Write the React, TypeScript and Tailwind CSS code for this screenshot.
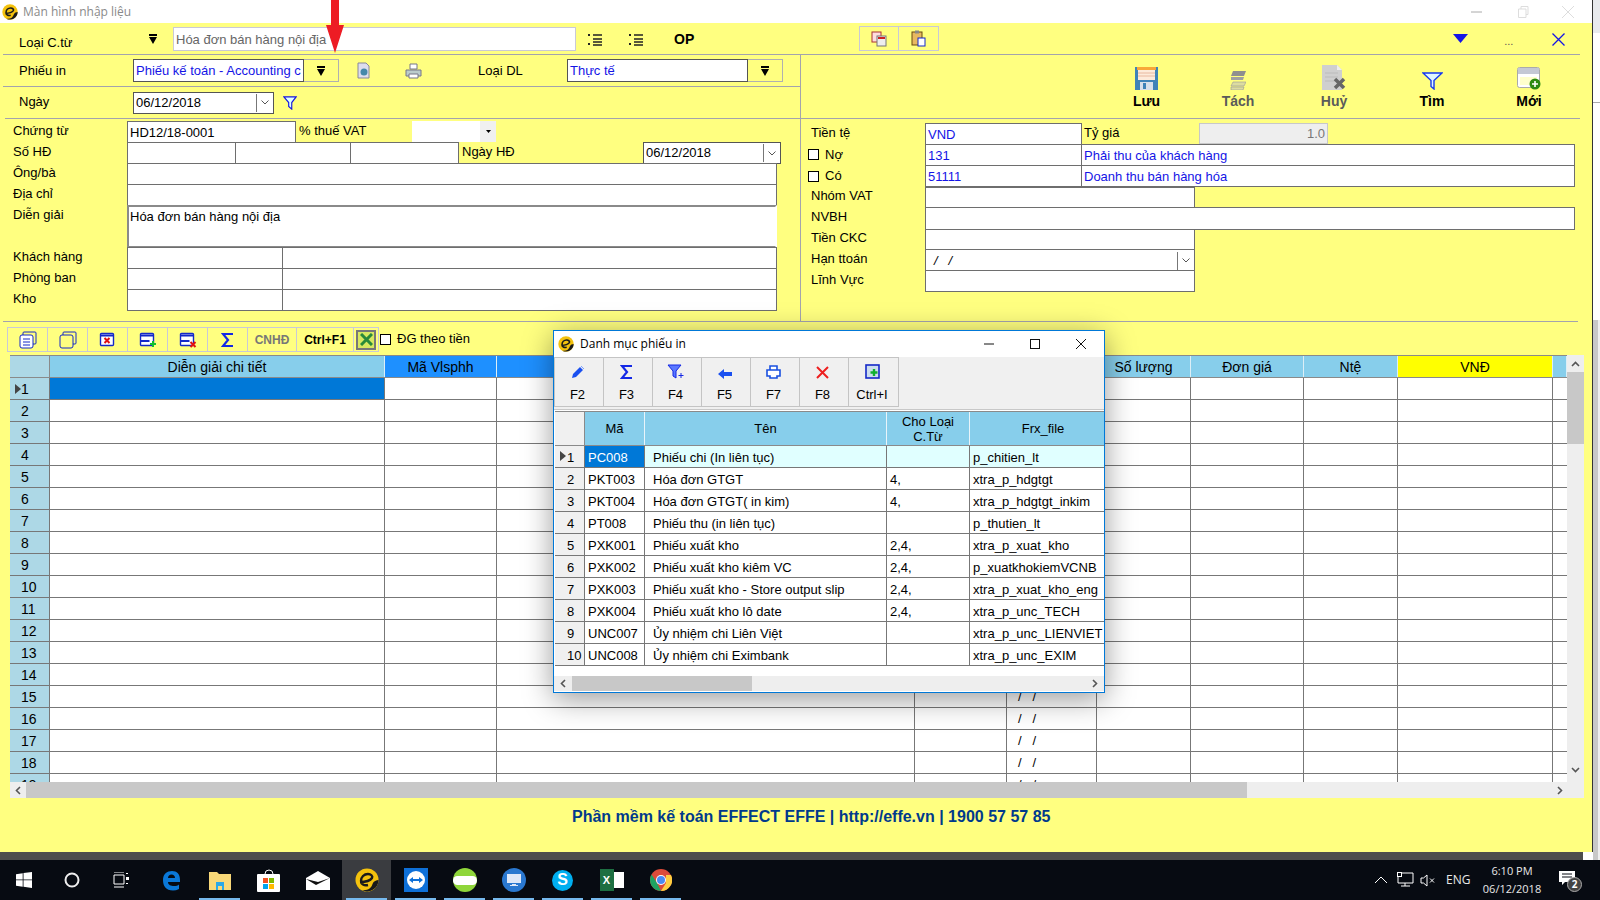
import type { ReactNode } from "react";

const Ctl = ({ className = "", children }: { className?: string; children?: ReactNode }) => (
  <div className={`h-[22px] shrink-0 -ml-px border border-[#6e6e6e] bg-white pl-[2px] pt-px flex items-center overflow-hidden whitespace-nowrap ${className}`}>
    {children}
  </div>
);

const Chevron = () => (
  <div className="ml-auto h-[18px] w-[17px] border-l border-[#777] flex items-center justify-center shrink-0">
    <svg width="8" height="5" viewBox="0 0 8 5"><path d="M0.5 0.5 4 4 7.5 0.5" fill="none" stroke="#555" /></svg>
  </div>
);

const DropArrow = ({ className = "" }: { className?: string }) => (
  <svg className={className} width="8" height="10" viewBox="0 0 8 10"><path d="M0 0h8v2H0zM0 3h8L4 10z" fill="#000" /></svg>
);

const Line = ({ className = "" }: { className?: string }) => <div className={`h-px bg-[#a3a3ad] shrink-0 ${className}`} />;

const EffeLogo = ({ size = 16 }: { size?: number }) => (
  <svg width={size} height={size} viewBox="0 0 24 24">
    <circle cx="12" cy="12" r="11.5" fill="#f4c20d" />
    <path d="M23.5 12a11.5 11.5 0 0 1-17 10c6 1 10-2 11-6 1-3 4-4 6-4z" fill="#1a1a1a" />
    <path d="M5 14c4 0 10-1 12-4 1-2-1-4-4-4-4 0-7 3-7 7 0 3 3 5 7 4" fill="none" stroke="#1a1a1a" strokeWidth="2.4" />
  </svg>
);

const ListIcon = () => (
  <svg width="16" height="14" viewBox="0 0 16 14">
    <path d="M1 1l2 2M3 1L1 3M1 10l2 2M3 10l-2 2" stroke="#222" />
    <path d="M6 2h9M6 6h9M6 9h9M6 12h9" stroke="#222" strokeWidth="1.4" />
  </svg>
);

const Funnel = ({ size = 16 }: { size?: number }) => (
  <svg width={size} height={size} viewBox="0 0 16 16">
    <path d="M1 1h14L10 7.5V15L6.5 12V7.5z" fill="#dff" stroke="#1414e0" strokeWidth="1.3" />
  </svg>
);

const Sigma = () => (
  <svg width="13" height="14" viewBox="0 0 13 14"><path d="M12 1H2l5 6-5 6h10" fill="none" stroke="#1428e6" strokeWidth="2.2" /></svg>
);

const WinIcon = ({ mark }: { mark: "x" | "plus" | "minusx" }) => (
  <svg width="18" height="18" viewBox="0 0 18 18">
    <rect x="1.5" y="2.5" width="13" height="12" rx="1" fill="#fff" stroke="#1428c8" strokeWidth="1.4" />
    <path d="M1.5 4.5h13" stroke="#1428c8" strokeWidth="2" />
    {mark === "x" && <path d="M5.5 7l5 5M10.5 7l-5 5" stroke="#e01010" strokeWidth="2" />}
    {mark === "plus" && <><path d="M1.5 10h9" stroke="#1428c8" strokeWidth="2" /><path d="M14 10v6M11 13h6" stroke="#10c030" strokeWidth="2" /></>}
    {mark === "minusx" && <><path d="M1.5 10h9" stroke="#1428c8" strokeWidth="2" /><path d="M11.5 11l5 5M16.5 11l-5 5" stroke="#e01010" strokeWidth="2" /></>}
  </svg>
);

const gridCols = ["w-[335px]", "w-[112px]", "w-[418px]", "w-[92px]", "w-[90px]", "w-[94px]", "w-[113px]", "w-[94px]", "w-[155px]", "w-[14px]"];
const gridHeads: [string, string][] = [
  ["Diễn giải chi tiết", "bg-[#87ceeb]"],
  ["Mã Vlsphh", "bg-[#1e90ff]"],
  ["", "bg-[#1e90ff]"],
  ["", "bg-[#87ceeb]"],
  ["", "bg-[#87ceeb]"],
  ["Số lượng", "bg-[#87ceeb]"],
  ["Đơn giá", "bg-[#87ceeb]"],
  ["Ntệ", "bg-[#87ceeb]"],
  ["VNĐ", "bg-[#ffff00]"],
  ["", "bg-[#87ceeb]"],
];

const printForms = [
  ["PC008", "Phiếu chi (In liên tục)", "", "p_chitien_lt"],
  ["PKT003", "Hóa đơn GTGT", "4,", "xtra_p_hdgtgt"],
  ["PKT004", "Hóa đơn GTGT( in kim)", "4,", "xtra_p_hdgtgt_inkim"],
  ["PT008", "Phiếu thu (in liên tục)", "", "p_thutien_lt"],
  ["PXK001", "Phiếu xuất kho", "2,4,", "xtra_p_xuat_kho"],
  ["PXK002", "Phiếu xuất kho kiêm VC", "2,4,", "p_xuatkhokiemVCNB"],
  ["PXK003", "Phiếu xuất kho - Store output slip", "2,4,", "xtra_p_xuat_kho_eng"],
  ["PXK004", "Phiếu xuất kho lô date", "2,4,", "xtra_p_unc_TECH"],
  ["UNC007", "Ủy nhiệm chi Liên Việt", "", "xtra_p_unc_LIENVIET"],
  ["UNC008", "Ủy nhiệm chi Eximbank", "", "xtra_p_unc_EXIM"],
];

const dialogTools: [ReactNode, string][] = [
  [<svg width="14" height="14" viewBox="0 0 14 14"><path d="M1 13l1-4 7-7 3 3-7 7z" fill="#1a50f0" /><path d="M10 1l3 3" stroke="#7aa0ff" /></svg>, "F2"],
  [<Sigma />, "F3"],
  [<svg width="18" height="15" viewBox="0 0 18 15"><path d="M1 1h13L9 7v7L6 12V7z" fill="#5a78ff" stroke="#1428e6" /><path d="M14 9v5M11.5 11.5h5" stroke="#1428e6" /></svg>, "F4"],
  [<svg width="14" height="10" viewBox="0 0 14 10"><path d="M0 5l6-5v3h8v4H6v3z" fill="#1a50f0" /></svg>, "F5"],
  [<svg width="15" height="14" viewBox="0 0 15 14"><path d="M4 1h7v4H4zM1 5h13v6h-3v2H4v-2H1z" fill="#fff" stroke="#1a50e0" strokeWidth="1.6" /></svg>, "F7"],
  [<svg width="13" height="13" viewBox="0 0 13 13"><path d="M1 1l11 11M12 1L1 12" stroke="#ee2020" strokeWidth="2" /></svg>, "F8"],
  [<svg width="15" height="15" viewBox="0 0 15 15"><rect x="1" y="1" width="13" height="13" fill="#cde" stroke="#1428c8" strokeWidth="1.6" /><path d="M9 5v7M5.5 8.5h7" stroke="#10b030" strokeWidth="2.4" /></svg>, "Ctrl+I"],
];

const Dialog = () => (
  <div className="absolute left-[553px] top-[330px] w-[552px] h-[363px] bg-white border border-[#0078d7] shadow-[0_6px_28px_rgba(0,0,0,0.4)] flex flex-col text-[13px] text-black">
    <div className="h-[26px] flex items-center pl-[4px] shrink-0">
      <EffeLogo />
      <span className="ml-[6px] [font-family:'Open_Sans',sans-serif] text-[12px]">Danh mục phiếu in</span>
      <div className="ml-auto flex items-center">
        <div className="w-[46px] flex justify-center"><svg width="10" height="10" viewBox="0 0 10 10"><path d="M0 5h10" stroke="#111" /></svg></div>
        <div className="w-[46px] flex justify-center"><svg width="10" height="10" viewBox="0 0 10 10"><rect x="0.5" y="0.5" width="9" height="9" fill="none" stroke="#111" /></svg></div>
        <div className="w-[46px] flex justify-center"><svg width="10" height="10" viewBox="0 0 10 10"><path d="M0 0l10 10M10 0L0 10" stroke="#111" /></svg></div>
      </div>
    </div>
    <div className="h-[53px] bg-[#f0f0f0] shrink-0 border-b border-[#c8c8c8]">
      <div className="flex h-[50px] w-fit border border-[#c4c4c4]">
        {dialogTools.map(([icon, key]) => (
          <div key={key} className="w-[49px] pr-[3px] border-r last:border-r-0 border-[#c4c4c4] flex flex-col items-center">
            <div className="h-[21px] flex items-end">{icon}</div>
            <div className="mt-[9px] leading-[14px]">{key}</div>
          </div>
        ))}
      </div>
    </div>
    <div className="flex-1 min-h-0 pl-[1px] pt-[1px] flex flex-col">
      <div className="flex h-[35px] shrink-0 border-t border-b border-[#8a8a8a]">
        <div className="w-[30px] bg-[#f0f0f0] border-r border-[#8a8a8a]" />
        {[
          ["Mã", "w-[60px] px-[8px]"],
          ["Tên", "w-[242px] px-[8px]"],
          ["Cho Loại C.Từ", "w-[83px] px-[8px]"],
          ["Frx_file", "flex-1 pl-[12px]"],
        ].map(([t, w]) => (
          <div key={t} className={`${w} bg-[#87ceeb] border-r border-[#e8f4fa] last:border-r-0 flex items-center justify-center text-center leading-[15px]`}>{t}</div>
        ))}
      </div>
      {printForms.map((r, i) => (
        <div key={r[0]} className={`flex h-[22px] shrink-0 border-b border-[#777] ${i === 0 ? "bg-[#e0ffff]" : ""}`}>
          <div className="w-[30px] bg-[#f0f0f0] border-r border-[#777] flex items-center pl-[12px] pt-[2px] relative">
            {i === 0 && <svg className="absolute left-[5px] top-[5px]" width="6" height="10" viewBox="0 0 6 10"><path d="M0 0l6 5-6 5z" fill="#444" /></svg>}
            {i + 1}
          </div>
          <div className={`w-[60px] border-r border-[#777] pl-[3px] pt-[2px] flex items-center ${i === 0 ? "bg-[#0078d7] text-white" : ""}`}>{r[0]}</div>
          <div className="w-[242px] border-r border-[#777] pl-[8px] pt-[2px] flex items-center whitespace-nowrap">{r[1]}</div>
          <div className="w-[83px] border-r border-[#777] pl-[3px] pt-[2px] flex items-center">{r[2]}</div>
          <div className="flex-1 pl-[3px] pt-[2px] flex items-center whitespace-nowrap overflow-hidden">{r[3]}</div>
        </div>
      ))}
    </div>
    <div className="h-[15px] shrink-0 bg-[#eeeeee] flex items-center mb-[1px]">
      <div className="w-[18px] flex justify-center"><svg width="6" height="9" viewBox="0 0 6 9"><path d="M5 1L1.5 4.5 5 8" fill="none" stroke="#555" strokeWidth="1.6" /></svg></div>
      <div className="w-[180px] h-full bg-[#c8c8c8]" />
      <div className="ml-auto w-[18px] flex justify-center"><svg width="6" height="9" viewBox="0 0 6 9"><path d="M1 1l3.500 3.500L1 8" fill="none" stroke="#555" strokeWidth="1.6" /></svg></div>
    </div>
  </div>
);

const ActionButton = ({ label, dim, icon, className }: { label: string; dim?: boolean; icon: ReactNode; className: string }) => (
  <div className={`${className} flex flex-col items-center`}>
    <div className="h-[25px] flex items-end">{icon}</div>
    <div className={`mt-[3px] font-bold text-[14px] leading-[16px] ${dim ? "text-[#5a5a5a]" : "text-black"}`}>{label}</div>
  </div>
);

const TaskIcon = ({ active, run = true, children }: { active?: boolean; run?: boolean; children: ReactNode }) => (
  <div className={`w-[49px] h-full flex items-center justify-center relative ${active ? "bg-[#3a3c40]" : ""}`}>
    {children}
    {run && <div className="absolute bottom-0 left-[4px] right-[4px] h-[2px] bg-[#76b9ed]" />}
  </div>
);

export default function App() {
  return (
    <div className="relative w-[1600px] h-[900px] overflow-hidden bg-white [font-family:'Liberation_Sans',sans-serif] text-[13px] text-black">
      <div className="flex h-[860px]">
        <div className="w-[1593px] flex flex-col">
          {/* title bar */}
          <div className="h-[23px] shrink-0 bg-white flex items-center pl-[2px] border-r border-[#333]">
            <EffeLogo />
            <span className="ml-[5px] [font-family:'Open_Sans',sans-serif] text-[12px] text-[#8a8a8a]">Màn hình nhập liệu</span>
            <div className="ml-auto flex items-center pr-[17px] text-[#ccc]">
              <svg width="12" height="10" viewBox="0 0 12 10"><path d="M0 5h11" stroke="#aaa" /></svg>
              <svg className="ml-[35px]" width="11" height="12" viewBox="0 0 11 12"><path d="M3 3V.5h7v8H8M.5 3h7.5v8.500H.5z" fill="none" stroke="#ddd" /></svg>
              <svg className="ml-[32px]" width="14" height="14" viewBox="0 0 14 14"><path d="M1 1l12 12M13 1L1 13" stroke="#ddd" /></svg>
            </div>
          </div>

          <div className="h-[829px] shrink-0 bg-[#ffff80] border-r border-[#333] flex flex-col">
            {/* top strip */}
            <div className="h-[31px] shrink-0 flex items-center pl-[19px]">
              <span className="w-[130px] mt-[9px]">Loại C.từ</span>
              <DropArrow className="mr-[16px]" />
              <div className="w-[403px] h-[24px] mt-px pt-[2px] border border-[#c9c9d6] bg-white flex items-center pl-[2px] text-[#666]">Hóa đơn bán hàng nội địa</div>
              <div className="ml-[11px] mt-[2px]"><ListIcon /></div>
              <div className="ml-[25px] mt-[2px]"><ListIcon /></div>
              <span className="ml-[30px] mt-[2px] font-bold text-[14px]">OP</span>
              <div className="ml-[165px] flex h-[25px] border border-[#c9c9d6]">
                <div className="w-[39px] border-r border-[#c9c9d6] flex items-center justify-center">
                  <svg width="16" height="16" viewBox="0 0 16 16"><rect x="1" y="1" width="9" height="10" fill="#fdd" stroke="#a33" /><rect x="6" y="5" width="9" height="10" fill="#eee" stroke="#777" /><path d="M7 7h7" stroke="#c22" strokeWidth="2" /></svg>
                </div>
                <div className="w-[39px] flex items-center justify-center">
                  <svg width="15" height="17" viewBox="0 0 15 17"><rect x="1" y="2" width="10" height="13" fill="#e8b860" stroke="#6a4a10" /><rect x="4" y="0.5" width="4" height="3" fill="#888" /><rect x="7" y="8" width="7" height="8" fill="#fff" stroke="#1428c8" /></svg>
                </div>
              </div>
              <svg className="ml-[514px]" width="15" height="9" viewBox="0 0 15 9"><path d="M0 0h15L7.500 9z" fill="#1414e6" /></svg>
              <span className="ml-[36px] mt-[6px] text-[#555] text-[11px]">...</span>
              <svg className="ml-[39px] mt-px" width="13" height="13" viewBox="0 0 13 13"><path d="M0.5 0.5l12 12M12.5 0.5l-12 12" stroke="#1414e6" strokeWidth="1.3" /></svg>
            </div>
            <Line className="ml-[3px] w-[1577px]" />

            {/* form body */}
            <div className="h-[266px] shrink-0 flex">
              <div className="w-[797px] shrink-0 ml-[3px] flex flex-col">
                <div className="h-[31px] shrink-0 flex items-center pl-[16px]">
                  <span className="w-[114px]">Phiếu in</span>
                  <div className="w-[171px] h-[23px] border border-[#555] bg-white pl-[2px] flex items-center text-[#1414e6] overflow-hidden whitespace-nowrap">Phiếu kế toán - Accounting c</div>
                  <div className="w-[35px] h-[23px] border border-l-0 border-[#b0b0b0] flex items-center justify-center"><DropArrow /></div>
                  <svg className="ml-[17px]" width="15" height="17" viewBox="0 0 15 17"><path d="M2 1h8l3 3v12H2z" fill="#dde" stroke="#889" /><circle cx="8" cy="10" r="3.500" fill="#48a" /></svg>
                  <svg className="ml-[34px]" width="17" height="16" viewBox="0 0 17 16"><path d="M5 1h7v5H5z" fill="#fff" stroke="#778" /><path d="M1 7h15v6H1z" fill="#bcc" stroke="#778" /><path d="M4 11h9v4H4z" fill="#fff" stroke="#778" /></svg>
                  <span className="ml-[56px] w-[89px]">Loại DL</span>
                  <div className="w-[181px] h-[23px] border border-[#555] bg-white pl-[2px] flex items-center text-[#1414e6]">Thực tế</div>
                  <div className="w-[35px] h-[23px] border border-l-0 border-[#b0b0b0] flex items-center justify-center"><DropArrow /></div>
                </div>
                <Line />
                <div className="h-[31px] shrink-0 flex items-center pl-[16px]">
                  <span className="w-[114px] -mt-[2px]">Ngày</span>
                  <div className="w-[141px] h-[22px] border border-[#555] bg-white pl-[2px] flex items-center">06/12/2018<Chevron /></div>
                  <div className="ml-[9px] mt-px"><Funnel size={14} /></div>
                </div>
                <Line className="ml-[2px]" />
                <div className="pt-[2px] pl-[10px] flex flex-col">
                  <div className="flex h-[21px]">
                    <span className="w-[115px]">Chứng từ</span>
                    <Ctl className="w-[169px]">HD12/18-0001</Ctl>
                    <span className="w-[116px] pl-[3px]">% thuế VAT</span>
                    <div className="w-[84px] h-[21px] bg-white flex justify-end">
                      <div className="w-[16px] bg-[#f0f0f0] flex items-center justify-center"><svg width="5" height="3" viewBox="0 0 5 3"><path d="M0 0h5L2.500 3z" fill="#000" /></svg></div>
                    </div>
                  </div>
                  <div className="flex h-[21px]">
                    <span className="w-[115px]">Số HĐ</span>
                    <Ctl className="w-[109px]" />
                    <Ctl className="w-[116px]" />
                    <Ctl className="w-[109px]" />
                    <span className="w-[184px] pl-[3px]">Ngày HĐ</span>
                    <div className="w-[138px] h-[22px] border border-[#555] bg-white pl-[2px] flex items-center">06/12/2018<Chevron /></div>
                  </div>
                  <div className="flex h-[21px]"><span className="w-[115px]">Ông/bà</span><Ctl className="w-[650px]" /></div>
                  <div className="flex h-[21px]"><span className="w-[115px]">Địa chỉ</span><Ctl className="w-[650px]" /></div>
                  <div className="flex h-[42px]">
                    <span className="w-[115px]">Diễn giải</span>
                    <div className="w-[650px] h-[43px] -ml-px border-2 border-[#8a8a8a] border-r-white pl-[1px] bg-white">Hóa đơn bán hàng nội địa</div>
                  </div>
                  <div className="flex h-[21px]"><span className="w-[115px]">Khách hàng</span><Ctl className="w-[156px]" /><Ctl className="w-[495px]" /></div>
                  <div className="flex h-[21px]"><span className="w-[115px]">Phòng ban</span><Ctl className="w-[156px]" /><Ctl className="w-[495px]" /></div>
                  <div className="flex h-[22px]"><span className="w-[115px]">Kho</span><Ctl className="w-[156px]" /><Ctl className="w-[495px]" /></div>
                </div>
              </div>

              <div className="flex-1 border-l border-[#a3a3ad] flex flex-col">
                <div className="h-[63px] shrink-0 flex items-center pl-[300px]">
                  <ActionButton className="w-[91px]" label="Lưu" icon={
                    <svg width="23" height="23" viewBox="0 0 23 23"><rect width="23" height="23" fill="#3f83b8" /><rect x="2" y="0" width="19" height="3" fill="#f8a838" /><rect x="3" y="3" width="17" height="10" fill="#fdeadb" /><path d="M3 6h17M3 9h17" stroke="#e8b8a0" /><rect x="5" y="15" width="13" height="8" fill="#d8e0ea" /><rect x="8" y="16" width="3" height="6" fill="#3f83b8" /></svg>
                  } />
                  <ActionButton className="w-[92px]" label="Tách" dim icon={
                    <svg width="16" height="20" viewBox="0 0 16 20"><path d="M3 1h13l-2 5H1z" fill="#8f8f8f" /><path d="M1 7h13l-1 3H1z" fill="#a0a0a0" /><path d="M3 12h13l-2 4H1zM1 17h13l-1 3H1z" fill="#dcdca0" stroke="#999" strokeWidth="0.6" /></svg>
                  } />
                  <ActionButton className="w-[100px]" label="Huỷ" dim icon={
                    <svg width="24" height="25" viewBox="0 0 24 25"><path d="M0 0h15l5 5v20H0z" fill="#cfcfcf" /><path d="M15 0v5h5" fill="#eee" /><path d="M3 8h13M3 12h13M3 16h10" stroke="#bbb" /><path d="M13 14l9 9M22 14l-9 9" stroke="#666" strokeWidth="3.500" /></svg>
                  } />
                  <ActionButton className="w-[96px]" label="Tìm" icon={
                    <svg width="21" height="18" viewBox="0 0 21 18"><path d="M1 1h19L12 8.500V17L9 14.500V8.500z" fill="#dff6ff" stroke="#1438f0" strokeWidth="1.4" /></svg>
                  } />
                  <ActionButton className="w-[98px]" label="Mới" icon={
                    <svg width="24" height="23" viewBox="0 0 24 23"><rect x="0.5" y="0.5" width="22" height="20" rx="2" fill="#fff" stroke="#aaa" /><rect x="1" y="1" width="21" height="6" fill="#c4c8d4" /><rect x="3" y="10" width="17" height="8" fill="#ffffcc" /><circle cx="18" cy="17" r="5.500" fill="#2a8a10" /><path d="M18 14v6M15 17h6" stroke="#fff" strokeWidth="1.600" /></svg>
                  } />
                </div>
                <Line className="w-[779px]" />
                <div className="pt-[4px] pl-[10px] flex flex-col">
                  <div className="flex h-[21px]">
                    <span className="w-[115px]">Tiền tệ</span>
                    <Ctl className="w-[157px] text-[#1414e6]">VND</Ctl>
                    <span className="w-[117px] pl-[2px]">Tỷ giá</span>
                    <div className="w-[129px] h-[21px] border border-[#c8c8c8] bg-[#eeeeee] text-[#777] flex items-center justify-end pr-[2px]">1.0</div>
                  </div>
                  <div className="flex h-[21px]">
                    <span className="w-[115px] flex items-center"><span className="-ml-[3px] w-[11px] h-[11px] border border-black bg-white mr-[6px]" />Nợ</span>
                    <Ctl className="w-[157px] text-[#1414e6]">131</Ctl>
                    <Ctl className="w-[494px] text-[#1414e6]">Phải thu của khách hàng</Ctl>
                  </div>
                  <div className="flex h-[22px]">
                    <span className="w-[115px] flex items-center"><span className="-ml-[3px] w-[11px] h-[11px] border border-black bg-white mr-[6px]" />Có</span>
                    <Ctl className="w-[157px] text-[#1414e6]">51111</Ctl>
                    <Ctl className="w-[494px] text-[#1414e6]">Doanh thu bán hàng hóa</Ctl>
                  </div>
                  <div className="flex h-[20px]"><span className="w-[115px] -mt-px">Nhóm VAT</span><Ctl className="w-[270px]" /></div>
                  <div className="flex h-[22px]"><span className="w-[115px]">NVBH</span><Ctl className="w-[650px] h-[23px]" /></div>
                  <div className="flex h-[20px]"><span className="w-[115px] -mt-px">Tiền CKC</span><Ctl className="w-[270px]" /></div>
                  <div className="flex h-[21px]"><span className="w-[115px]">Hạn ttoán</span><Ctl className="w-[270px] pl-[8px] italic">/ &nbsp; /<Chevron /></Ctl></div>
                  <div className="flex h-[21px]"><span className="w-[115px]">Lĩnh Vực</span><Ctl className="w-[270px]" /></div>
                </div>
              </div>
            </div>
            <Line className="ml-[3px] w-[1575px]" />

            {/* grid toolbar */}
            <div className="flex items-center mt-[5px] h-[25px] shrink-0 pl-[7px]">
              <div className="flex h-full border border-[#c9c9d6]">
                <div className="w-[40px] border-r border-[#c9c9d6] flex items-center justify-center">
                  <svg width="18" height="18" viewBox="0 0 18 18"><rect x="4" y="1" width="13" height="12" rx="1" fill="none" stroke="#1428c8" /><rect x="1" y="4" width="13" height="13" rx="2" fill="#fff" stroke="#1428c8" /><path d="M4 8h7M4 11h7M4 14h7" stroke="#1428c8" /></svg>
                </div>
                <div className="w-[40px] border-r border-[#c9c9d6] flex items-center justify-center">
                  <svg width="18" height="18" viewBox="0 0 18 18"><rect x="4" y="1" width="13" height="12" rx="1" fill="none" stroke="#1428c8" /><rect x="1" y="4" width="13" height="13" rx="2" fill="#ffff80" stroke="#1428c8" /></svg>
                </div>
                <div className="w-[40px] border-r border-[#c9c9d6] flex items-center justify-center"><WinIcon mark="x" /></div>
                <div className="w-[40px] border-r border-[#c9c9d6] flex items-center justify-center"><WinIcon mark="plus" /></div>
                <div className="w-[40px] border-r border-[#c9c9d6] flex items-center justify-center"><WinIcon mark="minusx" /></div>
                <div className="w-[40px] border-r border-[#c9c9d6] flex items-center justify-center"><Sigma /></div>
                <div className="w-[49px] border-r border-[#c9c9d6] flex items-center justify-center font-bold text-[12px] text-[#777]">CNHĐ</div>
                <div className="w-[56px] flex items-center justify-center font-bold text-[12px]">Ctrl+F1</div>
              </div>
              <div className="h-full w-[25px] border border-l-0 border-[#c9c9d6] flex items-center justify-center">
                <div className="w-[20px] h-[20px] border-2 border-[#777] bg-[#d8e860] flex items-center justify-center">
                  <svg width="13" height="13" viewBox="0 0 13 13"><path d="M1 1l11 11M12 1L1 12" stroke="#2a8a3a" strokeWidth="3" /></svg>
                </div>
              </div>
              <span className="ml-[1px] w-[11px] h-[11px] border border-black bg-white" />
              <span className="ml-[6px] -mt-[2px]">ĐG theo tiền</span>
            </div>

            {/* detail grid */}
            <div className="flex ml-[10px] mt-[3px] h-[427px] shrink-0 w-[1574px]">
              <div className="w-[1557px] overflow-hidden border-t border-[#8a8a8a] bg-white">
                <div className="flex h-[22px] border-b border-[#8a8a8a] text-[14px]">
                  <div className="w-[40px] shrink-0 bg-[#add8e6] border-r border-[#8a8a8a]" />
                  {gridHeads.map(([t, bg], i) => (
                    <div key={i} className={`${gridCols[i]} ${bg} shrink-0 border-r border-[#dceef6] pt-[2px] flex items-center justify-center`}>{t}</div>
                  ))}
                </div>
                {Array.from({ length: 19 }, (_, r) => (
                  <div key={r} className="flex h-[22px] border-b border-[#777]">
                    <div className="w-[40px] shrink-0 bg-[#add8e6] border-r border-[#777] relative flex items-center pl-[11px] pt-[2px] text-[14px]">
                      {r === 0 && <svg className="absolute left-[5px] top-[6px]" width="6" height="10" viewBox="0 0 6 10"><path d="M0 0l6 5-6 5z" fill="#444" /></svg>}
                      {r + 1}
                    </div>
                    {gridCols.map((w, c) => (
                      <div key={c} className={`${w} shrink-0 border-r last:border-r-0 border-[#777] flex items-center pl-[11px] ${r === 0 && c === 0 ? "bg-[#0078d7]" : ""}`}>
                        {/* rows above 15 sit behind the dialog */}
                        {c === 4 && r >= 14 ? "/ \u00a0 /" : ""}
                      </div>
                    ))}
                  </div>
                ))}
              </div>
              <div className="w-[17px] bg-[#eeeeee] flex flex-col">
                <div className="h-[17px] flex items-center justify-center"><svg width="9" height="6" viewBox="0 0 9 6"><path d="M1 5l3.500-3.500L8 5" fill="none" stroke="#555" strokeWidth="1.6" /></svg></div>
                <div className="h-[72px] bg-[#c8c8c8]" />
                <div className="mt-auto h-[24px] flex items-center justify-center"><svg width="9" height="6" viewBox="0 0 9 6"><path d="M1 1l3.500 3.500L8 1" fill="none" stroke="#555" strokeWidth="1.6" /></svg></div>
              </div>
            </div>
            <div className="flex ml-[10px] h-[16px] shrink-0 w-[1574px] bg-[#eeeeee] items-center">
              <div className="w-[16px] flex justify-center"><svg width="6" height="9" viewBox="0 0 6 9"><path d="M5 1L1.500 4.500 5 8" fill="none" stroke="#555" strokeWidth="1.6" /></svg></div>
              <div className="w-[1221px] h-full bg-[#c8c8c8]" />
              <div className="ml-auto mr-[21px]"><svg width="6" height="9" viewBox="0 0 6 9"><path d="M1 1l3.500 3.500L1 8" fill="none" stroke="#555" strokeWidth="1.6" /></svg></div>
            </div>

            <div className="pl-[572px] mt-[7px] font-bold text-[16px] text-[#003a8c]">Phần mềm kế toán EFFECT EFFE | http://effe.vn | 1900 57 57 85</div>
          </div>
          <div className="h-[8px] shrink-0 w-[1583px] bg-[#4d4d4d]" />
        </div>

        {/* sliver of the window behind */}
        <div className="flex-1 flex flex-col">
          <div className="h-[33px] bg-[#e8eaed]" />
          <div className="mt-[69px] h-px bg-[#aaa]" />
          <div className="mt-[217px] flex-1 flex">
            <div className="w-[5px] bg-[#c8c8c8]" />
            <div className="flex-1 bg-[#efefef]" />
          </div>
        </div>
      </div>

      {/* taskbar */}
      <div className="h-[40px] bg-[#070b12] flex items-center text-white">
        <div className="w-[48px] flex justify-center">
          <svg width="16" height="16" viewBox="0 0 16 16"><path d="M0 2.200l6.700-1V7.500H0zM7.500 1.100L16 0v7.500H7.500zM0 8.300h6.700v6.500L0 13.800zM7.500 8.300H16V16l-8.500-1.200z" fill="#fff" /></svg>
        </div>
        <div className="w-[48px] flex justify-center"><svg width="16" height="16" viewBox="0 0 16 16"><circle cx="8" cy="8" r="6.500" fill="none" stroke="#eee" strokeWidth="2" /></svg></div>
        <div className="w-[50px] flex justify-center"><svg width="16" height="16" viewBox="0 0 16 16"><path d="M1 0h10M1 15h10M1 3h10v9H1z" fill="none" stroke="#fff" /><path d="M13 1h2v1h-2zM13 5h3v3h-3zM13 11h2v1h-2z" fill="#fff" /></svg></div>
        <TaskIcon run={false}>
          <svg width="22" height="22" viewBox="0 0 22 22"><path d="M3 11c0-6 4-9 9-9s8 3 8 9v2H8c0 3 3 4 6 4 2 0 4-.5 5-1.500V20c-2 1-4 1.500-6 1.500C6 21.500 3 17 3 11zM8 9h7c0-2-1.500-3.500-3.500-3.500S8 7 8 9z" fill="#0a78d8" /></svg>
        </TaskIcon>
        <TaskIcon>
          <svg width="22" height="20" viewBox="0 0 22 20"><path d="M0 2h8l2 2h12v16H0z" fill="#f8d878" /><path d="M7 12h8v8h-2v-4H9v4H7z" fill="#2aa8e8" /></svg>
        </TaskIcon>
        <TaskIcon run={false}>
          <svg width="24" height="24" viewBox="0 0 24 24"><path d="M8 6a4 4 0 0 1 8 0" fill="none" stroke="#fff" /><rect y="6" width="23" height="18" rx="1" fill="#fff" /><rect x="6" y="10" width="5" height="5" fill="#f25022" /><rect x="12" y="10" width="5" height="5" fill="#7fba00" /><rect x="6" y="16" width="5" height="5" fill="#00a4ef" /><rect x="12" y="16" width="5" height="5" fill="#ffb900" /></svg>
        </TaskIcon>
        <TaskIcon run={false}>
          <svg width="24" height="19" viewBox="0 0 24 19"><path d="M12 0l12 7v12H0V7z" fill="#fff" /><path d="M0 8l10 6 14-7-12 4z" fill="#111" /></svg>
        </TaskIcon>
        <TaskIcon active><EffeLogo size={24} /></TaskIcon>
        <TaskIcon>
          <div className="w-[24px] h-[24px] bg-[#0e70d8] flex items-center justify-center">
            <svg width="18" height="18" viewBox="0 0 18 18"><circle cx="9" cy="9" r="9" fill="#fff" /><path d="M2 9l4-3v2h6V6l4 3-4 3v-2H6v2z" fill="#0e70d8" /></svg>
          </div>
        </TaskIcon>
        <TaskIcon>
          <div className="w-[24px] h-[24px] rounded-full bg-[#8fd63a] flex items-center justify-center"><div className="w-[24px] h-[9px] rounded-full bg-white" /></div>
        </TaskIcon>
        <TaskIcon>
          <div className="w-[24px] h-[24px] rounded-full bg-[#2a78d0] flex items-center justify-center">
            <svg width="14" height="13" viewBox="0 0 14 13"><path d="M0 0h14v9H0zM5 10h4v1h2v1H3v-1h2z" fill="#dfe8f8" /></svg>
          </div>
        </TaskIcon>
        <TaskIcon>
          <div className="w-[21px] h-[21px] rounded-full bg-[#00aff0] flex items-center justify-center font-bold text-[16px] text-white">S</div>
        </TaskIcon>
        <TaskIcon>
          <div className="relative w-[24px] h-[22px]">
            <div className="absolute right-0 top-[3px] w-[14px] h-[16px] bg-white" />
            <div className="absolute left-0 top-0 w-[14px] h-[22px] bg-[#1d6f42] flex items-center justify-center font-bold text-[11px] text-white">X</div>
          </div>
        </TaskIcon>
        <TaskIcon>
          <svg width="22" height="22" viewBox="0 0 22 22"><circle cx="11" cy="11" r="11" fill="#dd4b39" /><path d="M11 22A11 11 0 0 1 1.500 5.500L7 14l4 8z" fill="#1ea362" /><path d="M21 6a11 11 0 0 1-10 16l5-8V6z" fill="#ffcd40" /><circle cx="11" cy="11" r="5" fill="#fff" /><circle cx="11" cy="11" r="4" fill="#4a8af4" /></svg>
        </TaskIcon>

        <div className="ml-auto flex items-center text-[12px] [font-family:'Open_Sans',sans-serif] text-[#e8e8e8]">
          <svg width="14" height="8" viewBox="0 0 14 8"><path d="M1 7l6-6 6 6" fill="none" stroke="#fff" /></svg>
          <svg className="ml-[9px]" width="17" height="16" viewBox="0 0 17 16"><path d="M4 1h12v10H1V4M8 11v3M4 14h9" fill="none" stroke="#fff" /><rect x="0.5" y="0.5" width="4" height="4" fill="#070b12" stroke="#fff" /></svg>
          <svg className="ml-[6px]" width="16" height="13" viewBox="0 0 16 13"><path d="M1 4h2.500L7 1v11L3.500 9H1z" fill="none" stroke="#fff" /><path d="M10 4.500l4 4M14 4.500l-4 4" stroke="#fff" /></svg>
          <span className="ml-[10px] w-[24px]">ENG</span>
          <div className="ml-[10px] w-[64px] text-center leading-[18px] text-[11px]">
            <div>6:10 PM</div>
            <div>06/12/2018</div>
          </div>
          <div className="relative ml-[15px] mr-[25px] w-[16px] h-[20px]">
            <svg className="mt-[1px]" width="16" height="15" viewBox="0 0 16 15"><path d="M0 0h16v11H6l-3 3v-3H0z" fill="#fff" /><path d="M3 3h10M3 6h10" stroke="#070b12" /></svg>
            <div className="absolute -right-[7px] bottom-[-2px] w-[15px] h-[15px] rounded-full bg-[#444] border border-[#aaa] flex items-center justify-center text-[10px] font-bold text-white">2</div>
          </div>
        </div>
      </div>

      {/* dialog floats over the detail grid */}
      <Dialog />

      {/* red annotation arrow */}
      <svg className="absolute left-[326px] top-0" width="18" height="53" viewBox="0 0 18 53"><path d="M5 0h8v25h5L9 53 0 25h5z" fill="#ed1c24" /></svg>
    </div>
  );
}
